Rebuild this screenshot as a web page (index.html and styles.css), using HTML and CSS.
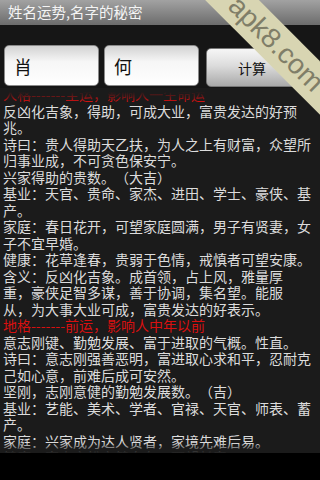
FILE: index.html
```html
<!DOCTYPE html>
<html lang="zh-CN">
<head>
  <meta charset="UTF-8">
  <meta name="viewport" content="width=device-width, initial-scale=1.0">
  <title>姓名运势,名字的秘密</title>
  <link rel="stylesheet" href="styles.css">
</head>
<body>
  <div class="titlebar">姓名运势,名字的秘密</div>

  <div class="form">
    <input class="field" type="text" value="肖">
    <input class="field" type="text" value="何">
    <button class="calc-btn">计算</button>
  </div>

  <div class="result">
    <div class="result-text">
      <div class="grid-title first">人格-------主运，影响人一生命运</div>
      <p>反凶化吉象，得助，可成大业，富贵发达的好预<br>兆。</p>
      <p>诗曰：贵人得助天乙扶，为人之上有财富，众望所<br>归事业成，不可贪色保安宁。</p>
      <p>兴家得助的贵数。（大吉）</p>
      <p>基业：天官、贵命、家杰、进田、学士、豪侠、基<br>产。</p>
      <p>家庭：春日花开，可望家庭圆满，男子有贤妻，女<br>子不宜早婚。</p>
      <p>健康：花草逢春，贵弱于色情，戒慎者可望安康。</p>
      <p>含义：反凶化吉象。成首领，占上风，雅量厚<br>重，豪侠足智多谋，善于协调，集名望。能服<br>从，为大事大业可成，富贵发达的好表示。</p>
      <div class="grid-title">地格-------前运，影响人中年以前</div>
      <p>意志刚键、勤勉发展、富于进取的气概。性直。</p>
      <p>诗曰：意志刚强善恶明，富进取心求和平，忍耐克<br>己如心意，前难后成可安然。</p>
      <p>坚刚，志刚意健的勤勉发展数。（吉）</p>
      <p>基业：艺能、美术、学者、官禄、天官、师表、蓄<br>产。</p>
      <p>家庭：兴家成为达人贤者，家境先难后易。</p>
      <p>健康：富山之松宫健自在，可望长寿。</p>
    </div>
  </div>

  <!-- watermark from the screenshot source -->
  <div class="ribbon">apk8.com</div>
</body>
</html>
```

FILE: styles.css
```css
:root {
  --title-top: #a2a2a2;
  --title-bottom: #6c6c6c;
  --window-bg: #161616;
  --result-bg: #1b1b1b;
  --text-color: #dcdcdc;
  --red-text: #d81010;
  --cjk: "Noto Sans CJK SC", "Noto Sans", sans-serif;
}

* {
  margin: 0;
  padding: 0;
  box-sizing: border-box;
}

body {
  width: 320px;
  height: 480px;
  background-color: #000;
  font-family: "Liberation Sans", var(--cjk);
  overflow: hidden;
  position: relative;
}

.titlebar {
  height: 25px;
  padding-left: 8px;
  line-height: 24px;
  font-size: 14.5px;
  color: #f4f4f4;
  background: linear-gradient(var(--title-top), var(--title-bottom));
  font-family: var(--cjk);
}

.form {
  display: flex;
  align-items: flex-start;
  gap: 5px;
  height: 63px;
  padding: 20px 0 0 4px;
  background-color: var(--window-bg);
}

.field {
  width: 95px;
  height: 41px;
  padding-left: 9px;
  border: 1px solid #8a8a8a;
  border-radius: 5px;
  background: linear-gradient(#d2d2d2, #f6f6f6 40%, #ffffff);
  font-family: var(--cjk);
  font-size: 18px;
  color: #111;
  outline: none;
}

.calc-btn {
  width: 92px;
  height: 39px;
  margin: 3px 0 0 2px;
  border: 1px solid #777;
  border-radius: 5px;
  background: linear-gradient(#f6f6f6, #dcdcdc 45%, #a9a9a9);
  font-family: var(--cjk);
  font-size: 14px;
  color: #111;
}

.result {
  height: 365px;
  background-color: var(--result-bg);
  overflow: hidden;
  position: relative;
}

/* scroll fading edges */
.result::before,
.result::after {
  content: "";
  position: absolute;
  left: 0;
  right: 0;
  height: 14px;
  z-index: 1;
}

.result::before {
  top: 0;
  background: linear-gradient(var(--result-bg) 4px, rgba(27, 27, 27, 0.55) 9px, rgba(27, 27, 27, 0));
}

.result::after {
  bottom: 0;
  height: 10px;
  background: linear-gradient(rgba(27, 27, 27, 0), var(--result-bg));
}

.result-text {
  padding-left: 3px;
  font-family: var(--cjk);
  font-size: 14px;
  line-height: 16.5px;
  color: var(--text-color);
  white-space: nowrap;
  text-spacing-trim: space-all;
}

.grid-title {
  color: var(--red-text);
}

.grid-title.first {
  margin-top: -2px;
}

.ribbon {
  position: absolute;
  left: 146px;
  top: 25px;
  width: 260px;
  height: 38px;
  line-height: 38px;
  text-align: center;
  transform: rotate(45deg);
  background-color: #d8d5b2;
  color: #807e68;
  font-family: "Liberation Sans", sans-serif;
  font-size: 28px;
  z-index: 5;
}
```
